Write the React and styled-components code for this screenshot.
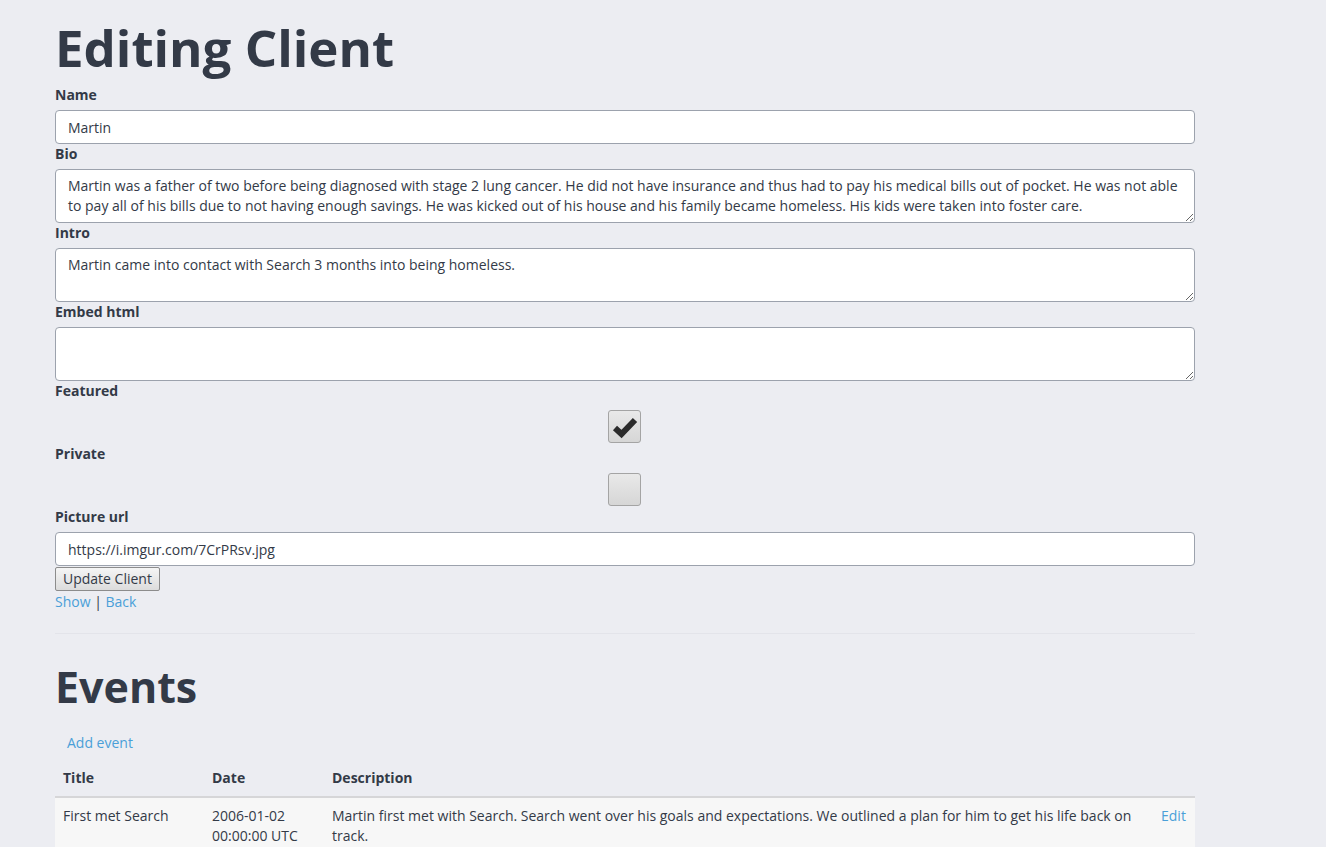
import React from "react";
import styled, { createGlobalStyle } from "styled-components";

const GlobalStyle = createGlobalStyle`
  html, body {
    margin: 0;
    background: #ecedf2;
    color: #333a47;
    font-family: "Open Sans", "DejaVu Sans", sans-serif;
    font-size: 14px;
    line-height: 20px;
  }
  * { box-sizing: border-box; }
`;

const Page = styled.div`
  width: 1140px;
  margin-left: 55px;
`;

const Heading = styled.h1`
  font-size: ${(p) => p.size}px;
  line-height: 1.1;
  font-weight: 700;
  margin: ${(p) => p.top}px 0 ${(p) => p.bottom}px;
  color: #333a47;
`;

const Field = styled.div`
  display: flex;
  flex-direction: column;
`;

const Label = styled.label`
  font-weight: 700;
  font-size: 14px;
  line-height: 20px;
  margin-bottom: 5px;
`;

const TextInput = styled.input`
  height: 34px;
  padding: 6px 12px;
  font: inherit;
  color: #333a47;
  background: #fff;
  border: 1px solid #9ca2ad;
  border-radius: 4px;
  outline: none;
`;

const TextArea = styled.textarea`
  height: 54px;
  padding: 6px 12px;
  font: inherit;
  line-height: 20px;
  color: #333a47;
  background: #fff;
  border: 1px solid #9ca2ad;
  border-radius: 4px;
  outline: none;
  resize: vertical;
`;

const CheckRow = styled.div`
  display: flex;
  justify-content: center;
  padding: 4px 1px 0 0;
  height: 38px;
`;

const CheckBox = styled.span`
  display: inline-flex;
  align-items: center;
  justify-content: center;
  width: 33px;
  height: 33px;
  border: 1px solid #a4a4a4;
  border-radius: 3px;
  background: linear-gradient(#e9e9e9, #d6d6d6);
`;

const Button = styled.button`
  align-self: flex-start;
  height: 24px;
  padding: 0 7px;
  margin-top: 1px;
  font: inherit;
  font-size: 14px;
  color: #333a47;
  border: 1px solid #8c8c8c;
  border-radius: 2px;
  background: linear-gradient(#f5f5f5, #dcdcdc);
`;

const Links = styled.div`
  margin-top: 1px;
  color: #333a47;
`;

const Link = styled.a`
  color: #4a9fd8;
  text-decoration: none;
`;

const Rule = styled.hr`
  margin: 21px 0 0;
  border: 0;
  border-top: 1px solid #e3e4ea;
`;

const LinkButton = styled.a`
  display: inline-block;
  padding: 7px 12px;
  color: #4a9fd8;
  text-decoration: none;
`;

const Table = styled.table`
  width: 100%;
  border-collapse: collapse;
`;

const Th = styled.th`
  text-align: left;
  padding: 8px;
  font-weight: 700;
  border-bottom: 2px solid #d6d6d8;
  vertical-align: bottom;
  width: ${(p) => p.w || "auto"};
`;

const Row = styled.tr`
  background: #f7f7f7;
`;

const Td = styled.td`
  padding: 8px;
  vertical-align: top;
`;

function Check({ checked }) {
  return (
    <CheckBox>
      {checked && (
        <svg width="26" height="26" viewBox="0 0 26 26">
          <path d="M3 14 L9.5 20 L23 6" fill="none" stroke="#2b2b2b" strokeWidth="6" strokeLinejoin="miter" />
        </svg>
      )}
    </CheckBox>
  );
}

export default function App() {
  return (
    <Page>
      <GlobalStyle />
      <Heading size={51} top={19} bottom={10}>Editing Client</Heading>
      <Field>
        <Label>Name</Label>
        <TextInput defaultValue="Martin" />
      </Field>
      <Field>
        <Label>Bio</Label>
        <TextArea defaultValue="Martin was a father of two before being diagnosed with stage 2 lung cancer. He did not have insurance and thus had to pay his medical bills out of pocket. He was not able to pay all of his bills due to not having enough savings. He was kicked out of his house and his family became homeless. His kids were taken into foster care." />
      </Field>
      <Field>
        <Label>Intro</Label>
        <TextArea defaultValue="Martin came into contact with Search 3 months into being homeless." />
      </Field>
      <Field>
        <Label>Embed html</Label>
        <TextArea defaultValue="" />
      </Field>
      <Field>
        <Label>Featured</Label>
        <CheckRow>
          <Check checked />
        </CheckRow>
      </Field>
      <Field>
        <Label>Private</Label>
        <CheckRow>
          <Check />
        </CheckRow>
      </Field>
      <Field>
        <Label>Picture url</Label>
        <TextInput defaultValue="https://i.imgur.com/7CrPRsv.jpg" />
        <Button>Update Client</Button>
      </Field>
      <Links>
        <Link href="#">Show</Link> | <Link href="#">Back</Link>
      </Links>
      <Rule />
      <Heading size={43} top={29} bottom={16}>Events</Heading>
      <LinkButton href="#">Add event</LinkButton>
      <Table>
        <thead>
          <tr>
            <Th w="149px">Title</Th>
            <Th w="120px">Date</Th>
            <Th>Description</Th>
            <Th w="42px"></Th>
          </tr>
        </thead>
        <tbody>
          <Row>
            <Td>First met Search</Td>
            <Td>2006-01-02 00:00:00 UTC</Td>
            <Td>
              Martin first met with Search. Search went over his goals and expectations. We outlined a plan for him to get his life back on track.
            </Td>
            <Td>
              <Link href="#">Edit</Link>
            </Td>
          </Row>
        </tbody>
      </Table>
    </Page>
  );
}
